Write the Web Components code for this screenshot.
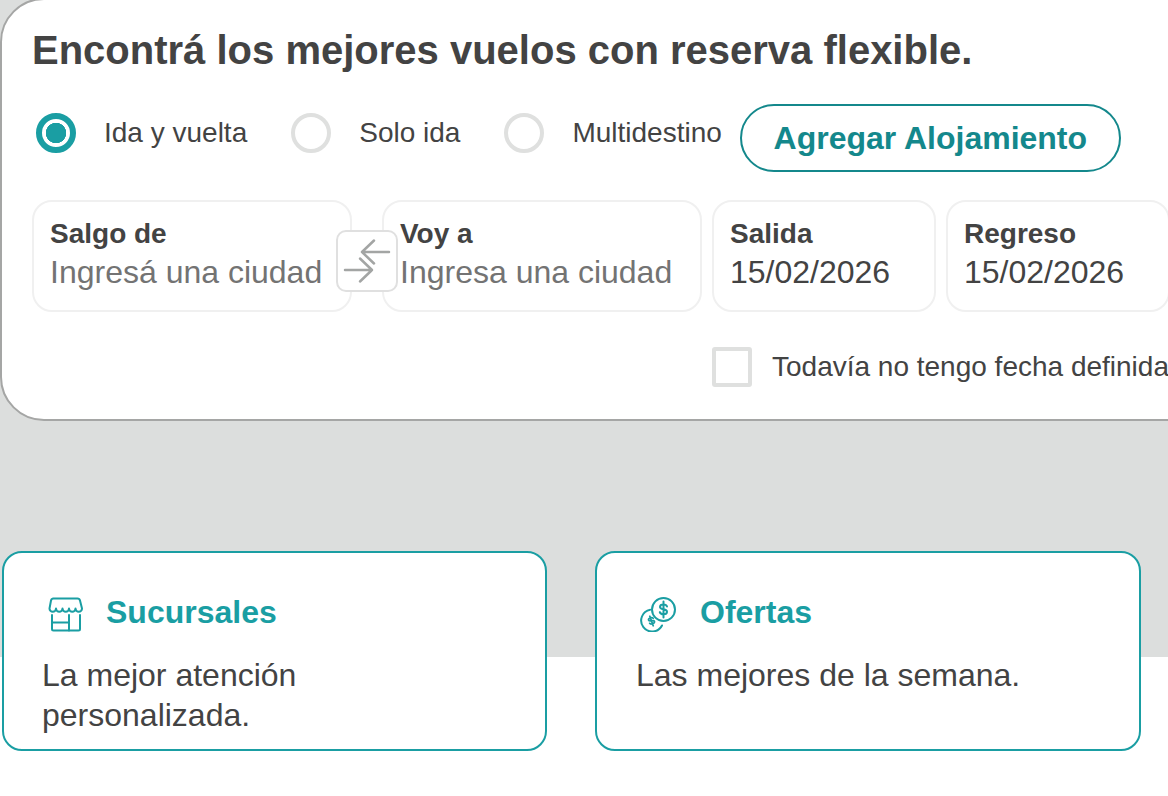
<!DOCTYPE html>
<html lang="es">
<head>
<meta charset="utf-8">
<title>Vuelos</title>
<style>
html, body { margin: 0; height: 100%; overflow: hidden; }
body {
    font-family: "Liberation Sans", Arial, sans-serif;
    color: #434343;
    background: linear-gradient(#dcdedd 657px, #fff 657px);
}
</style>
</head>
<body>
<flight-page>
    <search-card heading="Encontrá los mejores vuelos con reserva flexible.">
        <trip-radio slot="trips" checked>Ida y vuelta</trip-radio>
        <trip-radio slot="trips">Solo ida</trip-radio>
        <trip-radio slot="trips" last>Multidestino</trip-radio>
        <pill-button slot="trips">Agregar Alojamiento</pill-button>

        <search-field slot="fields" label="Salgo de" value="Ingresá una ciudad" placeholder style="width:320px;margin-right:30px;z-index:1">
            <swap-button></swap-button>
        </search-field>
        <search-field slot="fields" label="Voy a" value="Ingresa una ciudad" placeholder style="width:320px;margin-right:10px"></search-field>
        <search-field slot="fields" label="Salida" value="15/02/2026" style="width:224px;margin-right:10px"></search-field>
        <search-field slot="fields" label="Regreso" value="15/02/2026" style="width:224px"></search-field>

        <date-check slot="check">Todavía no tengo fecha definida</date-check>
    </search-card>
    <info-row>
        <info-card title="Sucursales">
            <svg slot="icon" width="36" height="40" viewBox="0 0 36 40" fill="none" stroke="#1a9ea3" stroke-width="2" stroke-linejoin="round" stroke-linecap="round">
                <path d="M6 6.500h24.500q2 0 2.500 2l2 8a3.250 3.250 0 0 1-6.500 0a3.250 3.250 0 0 1-6.500 0a3.250 3.250 0 0 1-6.500 0a3.250 3.250 0 0 1-6.500 0a3.250 3.250 0 0 1-6.500 0l1.500-8q.5-2 2.500-2z"/>
                <path d="M5 23v14a1.500 1.500 0 0 0 1.500 1.500h25a1.500 1.500 0 0 0 1.500-1.500v-14"/>
                <path d="M5 30.500h17M22 23v15.500"/>
            </svg>
            La mejor atención personalizada.
        </info-card>
        <info-card title="Ofertas" style="width:546px;padding-left:39px">
            <svg slot="icon" width="40" height="40" viewBox="0 0 40 40" fill="none" stroke="#1a9ea3" stroke-width="2" stroke-linecap="round">
                <circle cx="24.500" cy="17.500" r="11.500"/>
                <path d="M28 14.500c-.4-1.200-1.800-2-3.500-2c-2 0-3.500 1-3.500 2.400c0 3.200 7 1.500 7 4.800c0 1.500-1.500 2.500-3.500 2.500c-1.800 0-3.300-.8-3.700-2.100M24.500 9.500v16"/>
                <path d="M11.200 17.700A11 11 0 1 0 23 33.500"/>
                <g transform="rotate(-20 12.500 29)" stroke-width="1.800">
                    <path d="M15 27c-.3-.8-1.300-1.300-2.500-1.300c-1.300 0-2.400.6-2.400 1.600c0 2 5 1 5 3c0 1-1.100 1.600-2.600 1.600c-1.200 0-2.300-.5-2.500-1.300M12.500 24v10"/>
                </g>
            </svg>
            Las mejores de la semana.
        </info-card>
    </info-row>
</flight-page>

<script>
class FlightPage extends HTMLElement {
    constructor() {
        super();
        this.attachShadow({ mode: 'open' });
        this.shadowRoot.innerHTML = `
        <style>
        :host { display: block; width: 1168px; height: 796px; }
        </style>
        <slot></slot>`;
    }
}

class SearchCard extends HTMLElement {
    constructor() {
        super();
        this.attachShadow({ mode: 'open' });
        this.shadowRoot.innerHTML = `
        <style>
        * { box-sizing: border-box; }
        :host {
            display: block;
            box-sizing: border-box;
            width: 1240px;
            height: 423px;
            margin-top: -2px;
            padding: 29px 30px 0 30px;
            background: #fff;
            border: 2px solid #a5a6a5;
            border-radius: 44px;
        }
        h1 {
            margin: 0;
            font-size: 40px;
            line-height: 42px;
            font-weight: 700;
            color: #434343;
            white-space: nowrap;
        }
        #trips { display: flex; align-items: flex-start; height: 68px; margin-top: 33px; padding-left: 4px; }
        #fields { display: flex; margin-top: 28px; }
        #check { margin-top: 35px; padding-left: 680px; }
        </style>
        <h1></h1>
        <div id="trips"><slot name="trips"></slot></div>
        <div id="fields"><slot name="fields"></slot></div>
        <div id="check"><slot name="check"></slot></div>`;
    }

    connectedCallback() {
        this.shadowRoot.querySelector('h1').innerText = this.getAttribute('heading');
    }
}

class TripRadio extends HTMLElement {
    constructor() {
        super();
        this.attachShadow({ mode: 'open' });
        this.shadowRoot.innerHTML = `
        <style>
        * { box-sizing: border-box; }
        :host { display: inline-flex; align-items: center; gap: 28px; margin: 9px 44px 0 0; font-size: 28px; color: #434343; white-space: nowrap; }
        :host([last]) { margin-right: 18px; }
        #dot { width: 40px; height: 40px; border-radius: 50%; border: 4px solid #dfe0df; background: #fff; flex: none; }
        :host([checked]) #dot { border: 6px solid #1a9ea3; background: radial-gradient(circle, #1a9ea3 0 10px, #fff 10.5px); }
        </style>
        <div id="dot"></div><span><slot></slot></span>`;
    }
}

class PillButton extends HTMLElement {
    constructor() {
        super();
        this.attachShadow({ mode: 'open' });
        this.shadowRoot.innerHTML = `
        <style>
        :host {
            display: flex; align-items: center; justify-content: center;
            box-sizing: border-box;
            width: 381px; height: 68px;
            border: 2px solid #14888c;
            border-radius: 34px;
            color: #14888c;
            font-size: 32px; font-weight: 700;
            white-space: nowrap;
        }
        </style>
        <slot></slot>`;
    }
}

class SearchField extends HTMLElement {
    constructor() {
        super();
        this.attachShadow({ mode: 'open' });
        this.shadowRoot.innerHTML = `
        <style>
        :host {
            display: block; position: relative; flex: none;
            box-sizing: border-box;
            height: 112px;
            padding: 17px 0 0 16px;
            border: 2px solid #f0f0f0;
            border-radius: 20px;
            background: #fff;
            white-space: nowrap;
        }
        b { display: block; font-size: 28px; line-height: 30px; color: #434343; }
        #value { display: block; font-size: 32px; line-height: 38px; margin-top: 4px; color: #434343; }
        :host([placeholder]) #value { color: #737373; }
        </style>
        <b></b><span id="value"></span><slot></slot>`;
    }

    connectedCallback() {
        this.shadowRoot.querySelector('b').innerText = this.getAttribute('label');
        this.shadowRoot.getElementById('value').innerText = this.getAttribute('value');
    }
}

class SwapButton extends HTMLElement {
    constructor() {
        super();
        this.attachShadow({ mode: 'open' });
        this.shadowRoot.innerHTML = `
        <style>
        :host {
            display: block; position: absolute; left: 302px; top: 28px;
            box-sizing: border-box; width: 62px; height: 62px;
            background: #fff; border: 2px solid #e0e0e0; border-radius: 10px;
        }
        svg { display: block; position: absolute; left: -2px; top: -2px; }
        </style>
        <svg width="62" height="62" viewBox="0 0 62 62" fill="none" stroke="#a3a5a4" stroke-width="2.500" stroke-linecap="round" stroke-linejoin="round">
            <path d="M53 22H26M38 10.500L26 22l12 11.500"/>
            <path d="M9 40h27M24 28.500L36 40L24 51.500"/>
        </svg>`;
    }
}

class DateCheck extends HTMLElement {
    constructor() {
        super();
        this.attachShadow({ mode: 'open' });
        this.shadowRoot.innerHTML = `
        <style>
        :host { display: flex; align-items: center; gap: 20px; font-size: 28px; color: #434343; white-space: nowrap; }
        #box { box-sizing: border-box; width: 40px; height: 40px; border: 4px solid #dfe0df; border-radius: 3px; flex: none; }
        </style>
        <div id="box"></div><span><slot></slot></span>`;
    }
}

class InfoRow extends HTMLElement {
    constructor() {
        super();
        this.attachShadow({ mode: 'open' });
        this.shadowRoot.innerHTML = `
        <style>
        :host { display: flex; gap: 48px; padding-left: 2px; margin-top: 130px; }
        </style>
        <slot></slot>`;
    }
}

class InfoCard extends HTMLElement {
    constructor() {
        super();
        this.attachShadow({ mode: 'open' });
        this.shadowRoot.innerHTML = `
        <style>
        * { box-sizing: border-box; }
        :host {
            display: block; box-sizing: border-box;
            width: 545px; height: 200px;
            background: #fff;
            border: 2px solid #1a9ea3;
            border-radius: 20px;
            padding: 35px 38px 0 38px;
            color: #434343;
        }
        #top { display: flex; align-items: center; height: 48px; gap: 18px; margin-bottom: 19px; }
        h2 { margin: 0; font-size: 32px; font-weight: 700; color: #1a9ea3; }
        #icon { display: flex; justify-content: center; width: 46px; flex: none; }
        #text { font-size: 32px; line-height: 40px; max-width: 400px; }
        </style>
        <div id="top"><div id="icon"><slot name="icon"></slot></div><h2></h2></div>
        <div id="text"><slot></slot></div>`;
    }

    connectedCallback() {
        this.shadowRoot.querySelector('h2').innerText = this.getAttribute('title');
    }
}

customElements.define('flight-page', FlightPage);
customElements.define('search-card', SearchCard);
customElements.define('trip-radio', TripRadio);
customElements.define('pill-button', PillButton);
customElements.define('search-field', SearchField);
customElements.define('swap-button', SwapButton);
customElements.define('date-check', DateCheck);
customElements.define('info-row', InfoRow);
customElements.define('info-card', InfoCard);
</script>
</body>
</html>
